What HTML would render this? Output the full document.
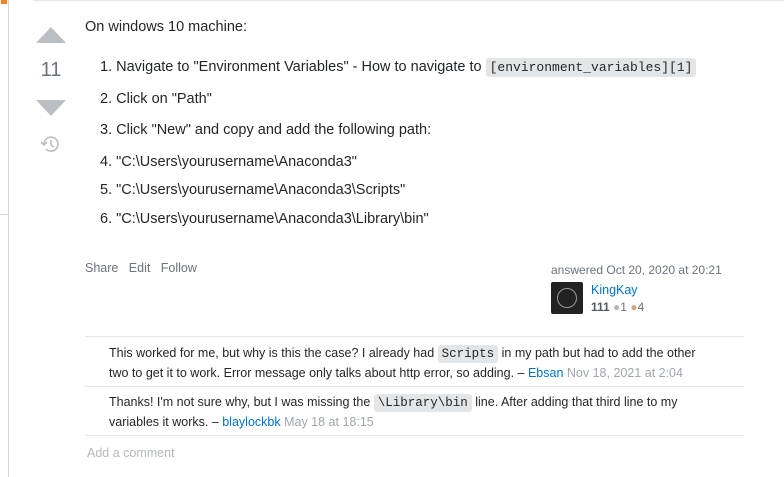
<!DOCTYPE html>
<html><head><meta charset="utf-8"><style>
body{margin:0;width:784px;height:477px;background:#fff;font-family:"Liberation Sans",sans-serif;color:#232629;position:relative;overflow:hidden}
.a{position:absolute;white-space:nowrap}
.t{font-size:14.5px}
code{font-family:"Liberation Mono",monospace;background:#e3e6e8;padding:2px 4px;border-radius:3px;font-size:12.5px}
.lnk{color:#0074cc}
.g{color:#9fa6ad}
</style></head><body>
<div class="a" style="left:8px;top:0;width:1px;height:477px;background:#d6d9dc"></div>
<div class="a" style="left:0;top:214px;width:8px;height:1px;background:#d6d9dc"></div>
<div class="a" style="left:1px;top:0;width:6px;height:4px;background:#f48225"></div>
<div class="a" style="left:33px;top:0;width:751px;height:1px;background:#e3e6e8"></div>
<svg class="a" style="left:35px;top:26px" width="32" height="18"><path d="M1 17 L16 1 L31 17Z" fill="#babfc4"/></svg>
<div class="a" style="left:38px;top:59px;width:26px;text-align:center;font-size:20px;color:#6a737c">11</div>
<svg class="a" style="left:35px;top:99px" width="32" height="18"><path d="M1 1 L31 1 L16 17Z" fill="#babfc4"/></svg>
<svg class="a" style="left:40px;top:134px" width="22" height="20" fill="none" stroke="#babfc4" stroke-width="1.6"><path d="M4 10a7 7 0 1 1 2 5"/><path d="M1 8l3 3 3-3"/><path d="M11 6v5l3 2"/></svg>
<div class="a t" style="left:85px;top:19px">On windows 10 machine:</div>
<div class="a t" style="left:100px;top:59px">1. Navigate to "Environment Variables" - How to navigate to <code style="font-size:13px">[environment_variables][1]</code></div>
<div class="a t" style="left:100px;top:91px">2. Click on "Path"</div>
<div class="a t" style="left:100px;top:122px">3. Click "New" and copy and add the following path:</div>
<div class="a t" style="left:100px;top:154px">4. "C:\Users\yourusername\Anaconda3"</div>
<div class="a t" style="left:100px;top:182px">5. "C:\Users\yourusername\Anaconda3\Scripts"</div>
<div class="a t" style="left:100px;top:211px">6. "C:\Users\yourusername\Anaconda3\Library\bin"</div>
<div class="a" style="left:85px;top:261px;font-size:12.5px;color:#6a737c">Share&nbsp;&nbsp; Edit&nbsp;&nbsp; Follow</div>
<div class="a" style="left:551px;top:263px;font-size:12px;color:#6a737c">answered Oct 20, 2020 at 20:21</div>
<div class="a" style="left:551px;top:282px;width:32px;height:32px;background:#222;border-radius:2px"><div style="position:absolute;left:6px;top:6px;width:18px;height:18px;border:1px solid #999;border-radius:50%"></div></div>
<div class="a" style="left:591px;top:283px;font-size:12.5px" ><span class="lnk">KingKay</span></div>
<div class="a" style="left:591px;top:300px;font-size:12px;color:#6a737c"><b style="color:#525960">111</b> <span style="color:#b4b8bc">●</span>1 <span style="color:#d1a684">●</span>4</div>
<div class="a" style="left:85px;top:336px;width:659px;height:1px;background:#e3e6e8"></div>
<div class="a" style="left:109px;top:344px;font-size:12.5px;line-height:19px;white-space:normal;width:595px">This worked for me, but why is this the case? I already had <code>Scripts</code> in my path but had to add the other two to get it to work. Error message only talks about http error, so adding. – <span class="lnk">Ebsan</span> <span class="g">Nov 18, 2021 at 2:04</span></div>
<div class="a" style="left:85px;top:386px;width:659px;height:1px;background:#e3e6e8"></div>
<div class="a" style="left:109px;top:393px;font-size:12.5px;line-height:19px;white-space:normal;width:595px">Thanks! I'm not sure why, but I was missing the <code>\Library\bin</code> line. After adding that third line to my variables it works. – <span class="lnk">blaylockbk</span> <span class="g">May 18 at 18:15</span></div>
<div class="a" style="left:85px;top:435px;width:659px;height:1px;background:#e3e6e8"></div>
<div class="a" style="left:87px;top:446px;font-size:12.5px;color:#b4b8bc">Add a comment</div>
</body></html>
